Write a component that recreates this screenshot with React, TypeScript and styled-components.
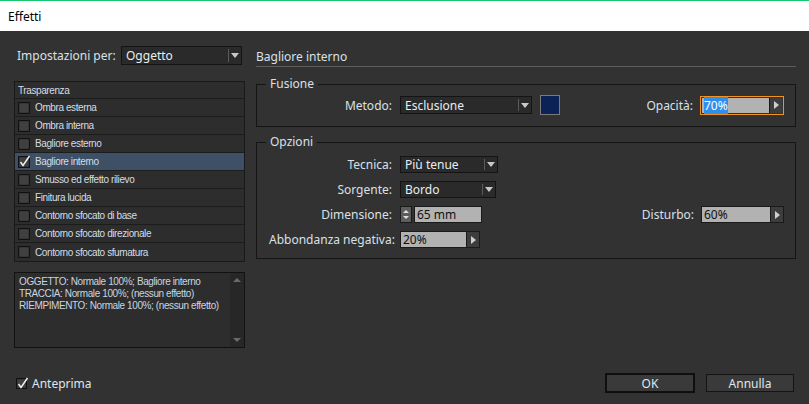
import React from "react";
import styled, { createGlobalStyle } from "styled-components";

const Global = createGlobalStyle`
  html, body { margin: 0; padding: 0; background: #323232; }
  body { font-family: "Noto Sans", "Open Sans", sans-serif; }
  * { box-sizing: border-box; }
`;

const Window = styled.div`
  width: 809px;
  height: 404px;
  background: #323232;
  display: flex;
  flex-direction: column;
  overflow: hidden;
  color: #d9e0e7;
`;

const TitleBar = styled.div`
  height: 31px;
  background: #ffffff;
  border-top: 1px solid #17c56c;
  display: flex;
  align-items: center;
  padding-left: 8px;
  font-size: 12px;
  color: #000;
`;

const Main = styled.div`
  display: flex;
  padding: 15px 13px 0 14px;
  gap: 11px;
`;

const LeftCol = styled.div`
  width: 231px;
  display: flex;
  flex-direction: column;
`;

const RightCol = styled.div`
  flex: 1;
  display: flex;
  flex-direction: column;
`;

const SettingsRow = styled.div`
  display: flex;
  align-items: center;
  height: 19px;
`;

const SettingsLabel = styled.span`
  width: 107px;
  padding-left: 3px;
  font-size: 12px;
`;

const SelectBox = styled.div<{ $w: number; $h: number }>`
  width: ${(p) => p.$w}px;
  height: ${(p) => p.$h}px;
  background: #2a2a2a;
  border: 1px solid #141414;
  display: flex;
  align-items: center;
  color: #e8edf2;
  font-size: 12px;
`;

const SelectText = styled.span`
  flex: 1;
  padding-left: 4px;
  white-space: nowrap;
`;

const SelectArrow = styled.span`
  width: 13px;
  margin: 2px 0;
  height: calc(100% - 4px);
  display: flex;
  align-items: center;
  justify-content: center;
  border-left: 1px solid #5a5a5a;
  &::after {
    content: "";
    border-left: 4px solid transparent;
    border-right: 4px solid transparent;
    border-top: 5px solid #c9c9c9;
  }
`;

const EffectList = styled.div`
  margin-top: 16px;
  border: 1px solid #191919;
  background: #2d2d2d;
  display: flex;
  flex-direction: column;
`;

const smallText = `
  font-family: "Liberation Sans", Arial, sans-serif;
  font-size: 10px;
  letter-spacing: -0.4px;
`;

const ListHeader = styled.div`
  height: 17px;
  display: flex;
  align-items: center;
  padding-left: 3px;
  ${smallText}
  color: #d5dde5;
  border-bottom: 1px solid #1c1c1c;
`;

const ListRow = styled.div<{ $selected?: boolean; $last?: boolean }>`
  height: 18px;
  display: flex;
  align-items: center;
  gap: 5px;
  padding-left: 3px;
  border-bottom: ${(p) => (p.$last ? "none" : "1px solid #1c1c1c")};
  background: ${(p) => (p.$selected ? "#3d5065" : "transparent")};
  ${smallText}
  color: #d5dde5;
`;

const Box = styled.span<{ $size: number }>`
  position: relative;
  display: block;
  width: ${(p) => p.$size}px;
  height: ${(p) => p.$size}px;
  background: #404040;
  border: 1px solid #111111;
  box-shadow: inset 0 0 0 1px #363636;
  flex: none;
`;

const CheckMark = styled.svg`
  position: absolute;
  left: -1px;
  top: -2px;
  overflow: visible;
`;

const InfoBox = styled.div`
  margin-top: 10px;
  height: 76px;
  border: 1px solid #121212;
  background: #2d2d2d;
  display: flex;
`;

const InfoText = styled.div`
  flex: 1;
  padding: 3px 4px;
  ${smallText}
  line-height: 12px;
  white-space: nowrap;
  color: #c8d5e2;
`;

const ScrollTrack = styled.div`
  width: 14px;
  background: #272727;
  display: flex;
  flex-direction: column;
  justify-content: space-between;
  align-items: center;
  padding: 5px 0;
`;

const ScrollArrow = styled.span<{ $down?: boolean }>`
  border-left: 4px solid transparent;
  border-right: 4px solid transparent;
  ${(p) => (p.$down ? "border-top: 4px solid #6a6a6a;" : "border-bottom: 4px solid #6a6a6a;")}
`;

const Heading = styled.div`
  height: 21px;
  display: flex;
  align-items: center;
  font-size: 12px;
  border-bottom: 1px solid #5c5c5c;
`;

const Group = styled.fieldset<{ $top: number; $pt: number; $pb: number }>`
  margin: ${(p) => p.$top}px 0 0 0;
  border: 1px solid #151515;
  padding: ${(p) => p.$pt}px 11px ${(p) => p.$pb}px 12px;
  min-width: 0;
`;

const Legend = styled.legend`
  margin-left: -3px;
  padding: 0 4px;
  font-size: 12px;
  line-height: 16px;
  color: #d9e0e7;
`;

const FormRow = styled.div<{ $h: number }>`
  display: flex;
  align-items: center;
  height: ${(p) => p.$h}px;
  & + & {
    margin-top: 8px;
  }
`;

const Label = styled.span`
  width: 123px;
  margin-right: 8px;
  text-align: right;
  font-size: 12px;
  white-space: nowrap;
`;

const RightLabel = styled.span`
  margin-left: auto;
  margin-right: 7px;
  font-size: 12px;
`;

const Swatch = styled.span`
  width: 20px;
  height: 20px;
  margin-left: 8px;
  border: 1px solid #7a7a7a;
  background: #0b2257;
`;

const NumField = styled.div<{ $w: number; $h: number; $focus?: boolean }>`
  width: ${(p) => p.$w}px;
  height: ${(p) => p.$h}px;
  display: flex;
  border: 1px solid ${(p) => (p.$focus ? "#f5921e" : "#1a1a1a")};
  ${(p) => (p.$focus ? "padding: 1px;" : "")}
`;

const NumValue = styled.div`
  flex: 1;
  background: #b2b2b2;
  color: #111;
  font-size: 12px;
  padding-left: 2px;
  display: flex;
  align-items: center;
`;

const Highlight = styled.span`
  background: #2f8fef;
  color: #fff;
`;

const ArrowBtn = styled.div`
  width: 13px;
  background: #3d3d3d;
  border-left: 1px solid #1a1a1a;
  display: flex;
  align-items: center;
  justify-content: center;
  &::after {
    content: "";
    border-top: 4px solid transparent;
    border-bottom: 4px solid transparent;
    border-left: 5px solid #cfcfcf;
  }
`;

const Spinner = styled.div`
  width: 12px;
  height: 17px;
  margin-right: 2px;
  background: #5d5d5d;
  border: 1px solid #1a1a1a;
  display: flex;
  flex-direction: column;
  align-items: center;
  justify-content: space-around;
  padding: 1px 0;
`;

const SpinArrow = styled.span<{ $down?: boolean }>`
  border-left: 3px solid transparent;
  border-right: 3px solid transparent;
  ${(p) => (p.$down ? "border-top: 3px solid #e0e0e0;" : "border-bottom: 3px solid #e0e0e0;")}
`;

const Footer = styled.div`
  margin-top: 25px;
  height: 20px;
  display: flex;
  align-items: center;
  padding: 0 15px 0 16px;
`;

const Preview = styled.label`
  display: flex;
  align-items: center;
  gap: 5px;
  font-size: 12px;
  color: #dfe6ee;
`;

const Buttons = styled.div`
  margin-left: auto;
  display: flex;
  align-items: center;
  gap: 11px;
`;

const Button = styled.button<{ $default?: boolean }>`
  width: ${(p) => (p.$default ? 90 : 88)}px;
  height: ${(p) => (p.$default ? 20 : 18)}px;
  background: #3a3a3a;
  border: ${(p) => (p.$default ? "2px solid #0f0f0f" : "1px solid #141414")};
  color: #dfe6ee;
  font-family: "Noto Sans", "Open Sans", sans-serif;
  font-size: 12px;
  padding: 0;
  display: flex;
  align-items: center;
  justify-content: center;
`;

const Check = () => (
  <CheckMark width="13" height="13" viewBox="0 0 13 13">
    <polyline points="2.5,7 5,10.5 11.5,1" fill="none" stroke="#f0f0f0" strokeWidth="1.5" />
  </CheckMark>
);

const Checkbox = ({ checked, size }: { checked?: boolean; size: number }) => (
  <Box $size={size}>{checked && <Check />}</Box>
);

const Select = ({ value, w, h }: { value: string; w: number; h: number }) => (
  <SelectBox $w={w} $h={h}>
    <SelectText>{value}</SelectText>
    <SelectArrow />
  </SelectBox>
);

const effects = [
  "Ombra esterna",
  "Ombra interna",
  "Bagliore esterno",
  "Bagliore interno",
  "Smusso ed effetto rilievo",
  "Finitura lucida",
  "Contorno sfocato di base",
  "Contorno sfocato direzionale",
  "Contorno sfocato sfumatura",
];

export default function App() {
  return (
    <Window>
      <Global />
      <TitleBar>Effetti</TitleBar>
      <Main>
        <LeftCol>
          <SettingsRow>
            <SettingsLabel>Impostazioni per:</SettingsLabel>
            <Select value="Oggetto" w={121} h={19} />
          </SettingsRow>
          <EffectList>
            <ListHeader>Trasparenza</ListHeader>
            {effects.map((e, i) => (
              <ListRow key={e} $selected={i === 3} $last={i === effects.length - 1}>
                <Checkbox size={12} checked={i === 3} />
                {e}
              </ListRow>
            ))}
          </EffectList>
          <InfoBox>
            <InfoText>
              OGGETTO: Normale 100%; Bagliore interno
              <br />
              TRACCIA: Normale 100%; (nessun effetto)
              <br />
              RIEMPIMENTO: Normale 100%; (nessun effetto)
            </InfoText>
            <ScrollTrack>
              <ScrollArrow />
              <ScrollArrow $down />
            </ScrollTrack>
          </InfoBox>
        </LeftCol>
        <RightCol>
          <Heading>Bagliore interno</Heading>
          <Group $top={9} $pt={3} $pb={11}>
            <Legend>Fusione</Legend>
            <FormRow $h={20}>
              <Label>Metodo:</Label>
              <Select value="Esclusione" w={132} h={18} />
              <Swatch />
              <RightLabel>Opacità:</RightLabel>
              <NumField $w={84} $h={19} $focus>
                <NumValue>
                  <Highlight>70%</Highlight>
                </NumValue>
                <ArrowBtn />
              </NumField>
            </FormRow>
          </Group>
          <Group $top={7} $pt={6} $pb={10}>
            <Legend>Opzioni</Legend>
            <FormRow $h={17}>
              <Label>Tecnica:</Label>
              <Select value="Più tenue" w={98} h={17} />
            </FormRow>
            <FormRow $h={17}>
              <Label>Sorgente:</Label>
              <Select value="Bordo" w={96} h={17} />
            </FormRow>
            <FormRow $h={17}>
              <Label>Dimensione:</Label>
              <Spinner>
                <SpinArrow />
                <SpinArrow $down />
              </Spinner>
              <NumField $w={68} $h={17}>
                <NumValue>65 mm</NumValue>
              </NumField>
              <RightLabel>Disturbo:</RightLabel>
              <NumField $w={83} $h={17}>
                <NumValue>60%</NumValue>
                <ArrowBtn />
              </NumField>
            </FormRow>
            <FormRow $h={17}>
              <Label>Abbondanza negativa:</Label>
              <NumField $w={80} $h={17}>
                <NumValue>20%</NumValue>
                <ArrowBtn />
              </NumField>
            </FormRow>
          </Group>
        </RightCol>
      </Main>
      <Footer>
        <Preview>
          <Checkbox size={11} checked />
          Anteprima
        </Preview>
        <Buttons>
          <Button $default>OK</Button>
          <Button>Annulla</Button>
        </Buttons>
      </Footer>
    </Window>
  );
}
